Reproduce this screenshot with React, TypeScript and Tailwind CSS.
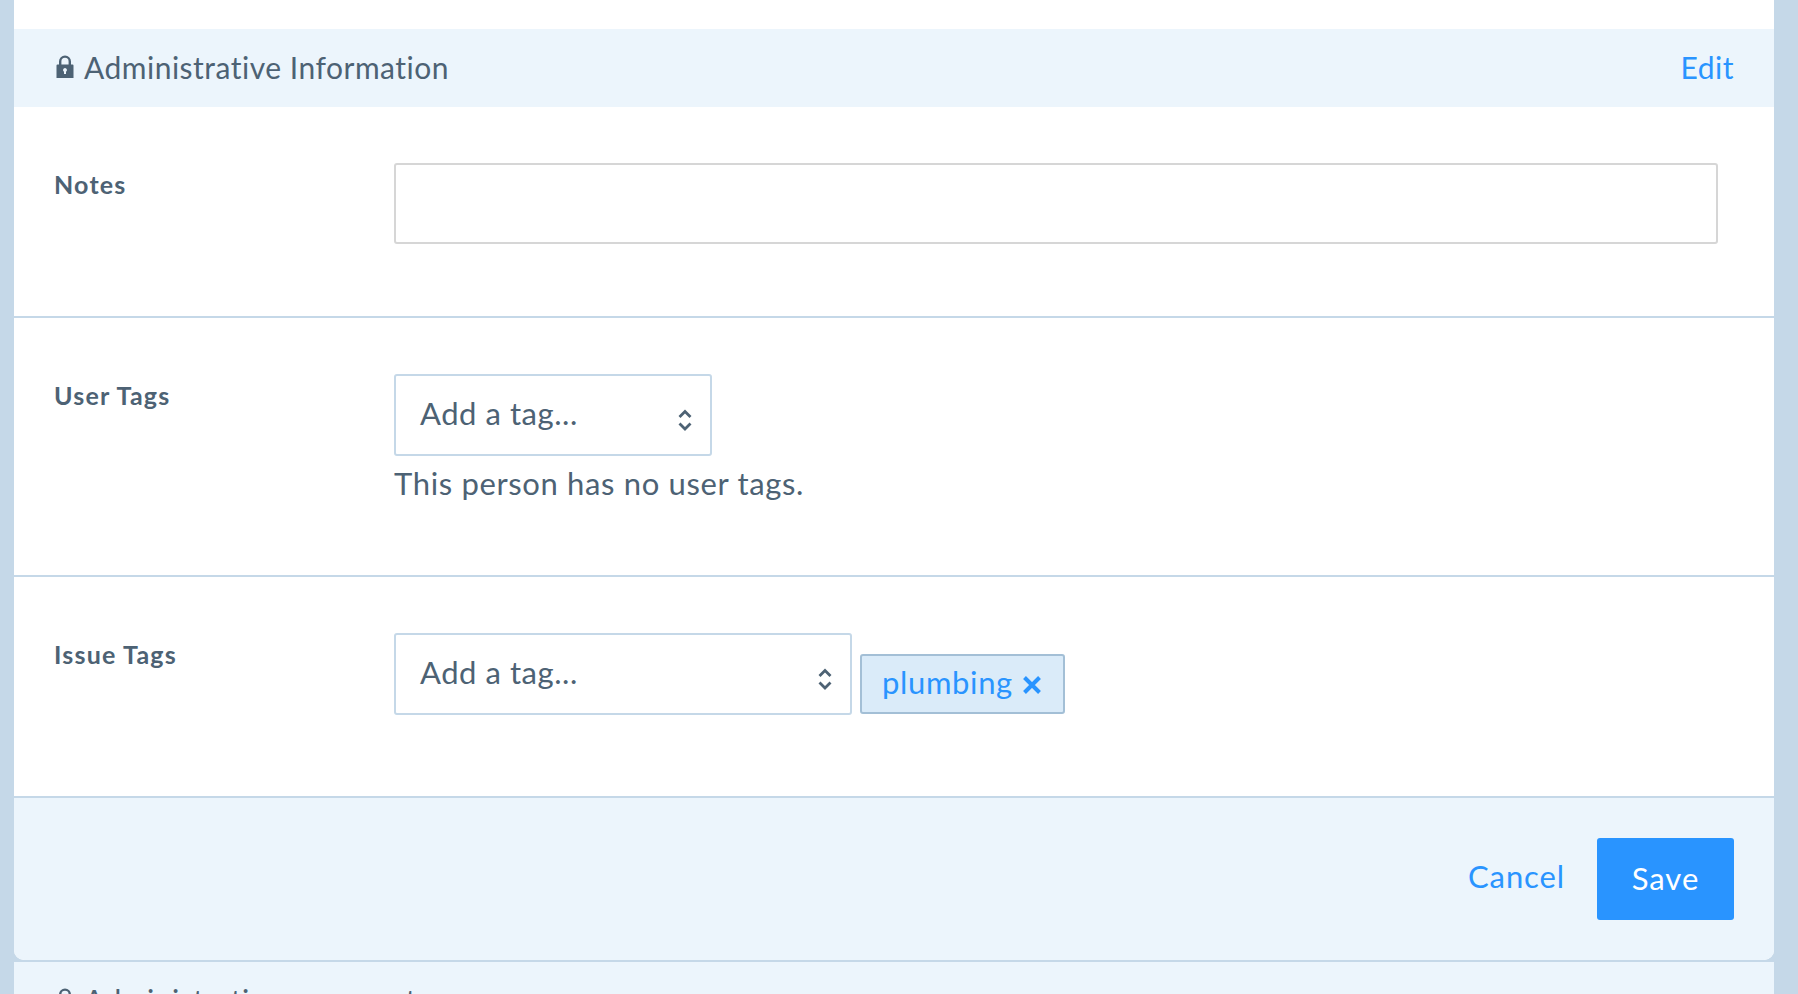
import React from "react";

const font = "[font-family:Lato,'Noto_Sans',sans-serif]";

function LockIcon() {
  return (
    <svg width="18" height="23" viewBox="0 0 18 23" className="-mt-[3px] shrink-0">
      <path d="M4.2 10V6.4a4.8 4.8 0 0 1 9.6 0V10" fill="none" stroke="#4d6274" strokeWidth="2.4" />
      <path
        fillRule="evenodd"
        fill="#4d6274"
        d="M1.5 9.5h15a1 1 0 0 1 1 1V23H.5V10.5a1 1 0 0 1 1-1zM9 13a2 2 0 0 0-1 3.7V19h2v-2.3A2 2 0 0 0 9 13z"
      />
    </svg>
  );
}

function Chevrons() {
  return (
    <svg width="16" height="24" viewBox="0 0 16 24" fill="none" stroke="#4d6274" strokeWidth="2.8" className="shrink-0">
      <path d="M2.5 9 8 3.5 13.5 9" />
      <path d="M2.5 15.5 8 21l5.5-5.5" />
    </svg>
  );
}

function SectionHeader(props: { title: string; edit?: boolean }) {
  return (
    <div className="flex h-[78px] items-center justify-between bg-[#ecf5fc] pl-[42px] pr-[40px]">
      <div className="flex items-center gap-[10px] text-[30px] tracking-[0.5px] text-[#4d6274]">
        <LockIcon />
        <span className="-mt-[2px]">{props.title}</span>
      </div>
      {props.edit && <a className="-mt-[2px] text-[30px] tracking-[0.5px] text-[#2994ff]">Edit</a>}
    </div>
  );
}

function TagSelect(props: { width: string }) {
  return (
    <div className={`${props.width} flex h-[82px] items-center justify-between rounded-[3px] border-2 border-[#c5d8e8] bg-white pl-6 pr-[17px]`}>
      <span className="-mt-[4px] text-[31px] tracking-[0.55px] text-[#4d6274]">Add a tag...</span>
      <div className="mt-[10px]">
        <Chevrons />
      </div>
    </div>
  );
}

function Row(props: { label: string; height: string; children: React.ReactNode }) {
  return (
    <div className={`${props.height} flex border-b-2 border-[#c5d8e8] pl-[40px] pt-[56px]`}>
      <div className="w-[340px] shrink-0 pt-[3px] text-[25px] leading-[36px] font-bold tracking-[1.2px] text-[#4d6274]">{props.label}</div>
      <div className="flex-1">{props.children}</div>
    </div>
  );
}

export default function App() {
  return (
    <div className={`${font} h-[994px] w-full overflow-hidden bg-[#c5d8e8] pl-[14px] pr-[24px]`}>
      <div className="overflow-hidden rounded-b-[10px] bg-white pt-[29px]">
        <SectionHeader title="Administrative Information" edit />

        <Row label="Notes" height="h-[211px]">
          <div className="mr-[56px] h-[81px] rounded-[3px] border-2 border-[#d6d6d6] bg-white" />
        </Row>

        <Row label="User Tags" height="h-[259px]">
          <TagSelect width="w-[318px]" />
          <div className="mt-[4px] text-[31px] leading-[46px] tracking-[0.65px] text-[#4d6274]">This person has no user tags.</div>
        </Row>

        <Row label="Issue Tags" height="h-[221px]">
          <div className="flex items-end gap-[8px]">
            <TagSelect width="w-[458px]" />
            <div className="mb-[1px] flex h-[60px] w-[205px] items-center gap-[9px] rounded-[3px] border-2 border-[#a3bfd6] bg-[#daebf9] pl-[20px]">
              <span className="-mt-[3px] text-[31px] tracking-[0.65px] text-[#2994ff]">plumbing</span>
              <svg width="20" height="20" viewBox="0 0 20 20" stroke="#2994ff" strokeWidth="4" className="mt-[2px]">
                <path d="M2.5 2.5l15 15M17.5 2.5l-15 15" />
              </svg>
            </div>
          </div>
        </Row>

        <div className="flex h-[162px] items-start justify-end gap-[32px] bg-[#ecf5fc] pt-[40px] pr-[40px]">
          <a className="mt-[15px] text-[31px] tracking-[0.9px] text-[#2994ff]">Cancel</a>
          <button className="h-[82px] w-[137px] rounded-[3px] bg-[#2994ff] pb-[1px] text-[31px] tracking-[1px] text-white">Save</button>
        </div>
      </div>
      <div className="mt-[2px]">
        <SectionHeader title="Administrative comments" />
      </div>
    </div>
  );
}
